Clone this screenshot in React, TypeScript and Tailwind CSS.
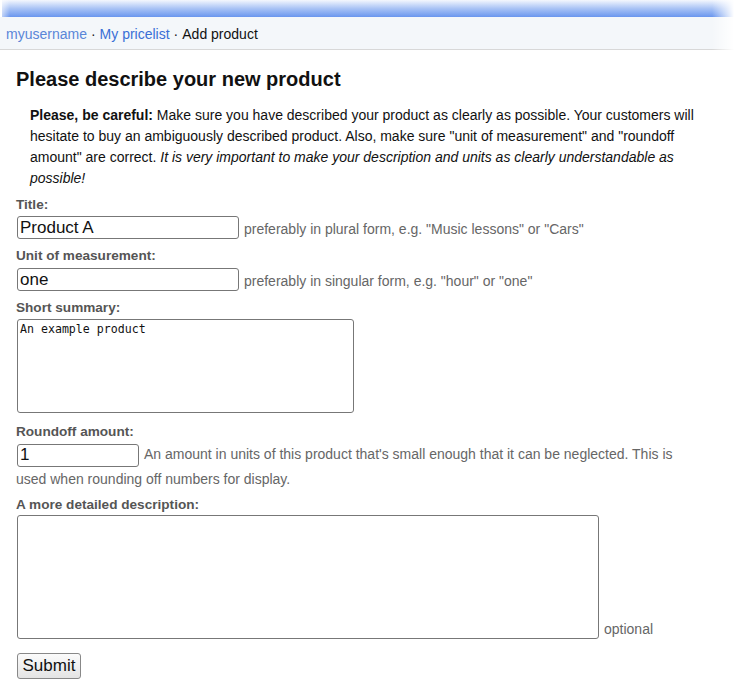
import React from "react";

export default function App() {
  const sans = "font-['Liberation_Sans',Arial,sans-serif]";
  return (
    <div className={`min-h-[690px] w-[734px] bg-white ${sans} text-[#222]`}>
      <div className="relative">
        <div className="h-[17px] ml-[2px] bg-gradient-to-b from-[#f4f7fd] via-[#a9c3f5] to-[#6a96ee]" />
        <div className="h-[33px] bg-[#f4f7fa] border-b border-[#d8d8d8] flex items-center pl-[6px] text-[14px] pt-[2px]">
          <a className="text-[#5a86d8]">myusername</a>
          <span className="mx-[4px] text-[#222]">·</span>
          <a className="text-[#3a6fd6]">My pricelist</a>
          <span className="mx-[4px]">·</span>
          <span className="text-[#111]">Add product</span>
        </div>
        <div className="absolute right-0 top-0 h-[50px] w-[22px] bg-gradient-to-r from-transparent to-white" />
        <div className="absolute left-0 top-0 h-[17px] w-[10px] bg-gradient-to-l from-transparent to-white/70" />
      </div>

      <div className="pl-[16px] pr-[24px]">
        <h1 className="text-[20px] font-bold text-[#111] mt-[16px] leading-[26px]">
          Please describe your new product
        </h1>
        <p className="mt-[13px] ml-[14px] mr-[4px] text-[14px] leading-[21px] text-[#111]">
          <b>Please, be careful:</b> Make sure you have described your product as clearly as possible. Your customers will hesitate to buy an ambiguously described product. Also, make sure "unit of measurement" and "roundoff amount" are correct.{" "}
          <i>It is very important to make your description and units as clearly understandable as possible!</i>
        </p>

        <form className="mt-[6px] text-[14px]">
          <div className="font-bold text-[#555] text-[13.6px] leading-[20px]">Title:</div>
          <div className="flex items-end mt-[1px]">
            <input
              defaultValue="Product A"
              className="ml-px w-[222px] h-[23px] border border-[#777] rounded-[3px] px-[2px] text-[17px] leading-[20px] text-[#111] outline-none"
            />
            <span className="ml-[5px] text-[#666] leading-[20px]">preferably in plural form, e.g. "Music lessons" or "Cars"</span>
          </div>

          <div className="font-bold text-[#555] text-[13.6px] leading-[20px] mt-[7px]">Unit of measurement:</div>
          <div className="flex items-end mt-[2px]">
            <input
              defaultValue="one"
              className="ml-px w-[222px] h-[23px] border border-[#777] rounded-[3px] px-[2px] text-[17px] leading-[20px] text-[#111] outline-none"
            />
            <span className="ml-[5px] text-[#666] leading-[20px]">preferably in singular form, e.g. "hour" or "one"</span>
          </div>

          <div className="font-bold text-[#555] text-[13.6px] leading-[20px] mt-[7px]">Short summary:</div>
          <textarea
            defaultValue="An example product"
            className="block ml-px mt-[1px] w-[337px] h-[94px] border border-[#777] rounded-[3px] px-[2px] py-[1px] font-['DejaVu_Sans_Mono',monospace] text-[11.6px] leading-[16px] text-[#111] resize-none outline-none"
          />

          <div className="font-bold text-[#555] text-[13.6px] leading-[20px] mt-[9px]">Roundoff amount:</div>
          <div className="mr-[30px] text-[#666] leading-[24px]">
            <input
              defaultValue="1"
              className="ml-px w-[122px] h-[23px] border border-[#777] rounded-[3px] px-[2px] text-[17px] leading-[20px] text-[#111] outline-none align-middle"
            />
            <span className="ml-[5px]">
              An amount in units of this product that's small enough that it can be neglected. This is used when rounding off numbers for display.
            </span>
          </div>

          <div className="font-bold text-[#555] text-[13.6px] leading-[20px] mt-[4px]">A more detailed description:</div>
          <div className="flex items-end">
            <textarea className="block ml-px w-[582px] h-[124px] border border-[#777] rounded-[3px] resize-none outline-none" />
            <span className="ml-[5px] text-[#666] leading-[18px] mb-px">optional</span>
          </div>

          <button
            type="button"
            className="block ml-px mt-[14px] h-[26px] w-[64px] border border-[#888] rounded-[3px] bg-gradient-to-b from-[#fbfbfb] to-[#e4e4e4] text-[17px] text-[#111] leading-[20px]"
          >
            Submit
          </button>
        </form>
      </div>
    </div>
  );
}
